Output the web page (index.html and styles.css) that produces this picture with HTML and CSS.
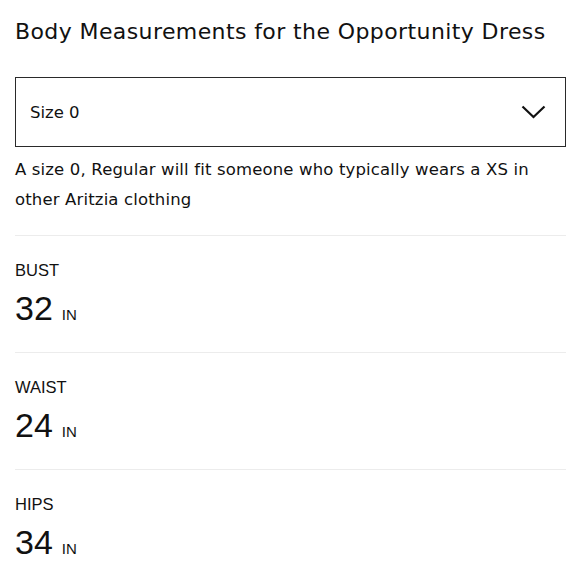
FILE: index.html
```html
<!DOCTYPE html>
<html lang="en">
<head>
<meta charset="utf-8">
<link rel="stylesheet" href="styles.css">
</head>
<body>
<main class="panel">
  <h1 class="title">Body Measurements for the Opportunity Dress</h1>
  <div class="select">
    <span class="select-label">Size 0</span>
    <svg class="chevron" width="25" height="14" viewBox="0 0 25 14" aria-hidden="true"><path d="M1.5 1.5 L12.5 12 L23.5 1.5" fill="none" stroke="#111" stroke-width="2.2"/></svg>
  </div>
  <p class="desc">A size 0, Regular will fit someone who typically wears a XS in other Aritzia clothing</p>
  <section class="measure">
    <div class="m-label">BUST</div>
    <div class="m-value">32<span class="unit">IN</span></div>
  </section>
  <section class="measure">
    <div class="m-label">WAIST</div>
    <div class="m-value">24<span class="unit">IN</span></div>
  </section>
  <section class="measure">
    <div class="m-label">HIPS</div>
    <div class="m-value">34<span class="unit">IN</span></div>
  </section>
</main>
</body>
</html>
```
FILE: styles.css
```css
html, body {
  margin: 0;
  padding: 0;
  background: #fff;
}
.panel {
  padding: 0 14px 0 15px;
  color: #111;
  font-family: "DejaVu Sans", "Noto Sans", sans-serif;
}
.title {
  margin: 0;
  padding-top: 17px;
  font-size: 22px;
  font-weight: 400;
  line-height: 30px;
  letter-spacing: 0.4px;
}
.select {
  margin-top: 30px;
  height: 68px;
  border: 1.5px solid #2a2a2a;
  display: flex;
  align-items: center;
  justify-content: space-between;
  padding: 0 19px 0 14px;
}
.select-label {
  font-size: 16.5px;
}
.chevron {
  display: block;
}
.desc {
  margin: 8px 0 0;
  font-size: 16.5px;
  letter-spacing: 0.15px;
  line-height: 30px;
  padding-right: 6px;
}
.measure {
  margin-top: 20px;
  border-top: 1px solid #ececec;
  padding-top: 24px;
  padding-bottom: 22px;
  font-family: "Liberation Sans", Arial, sans-serif;
}
.measure + .measure {
  margin-top: 0;
}
.m-label {
  font-size: 16.5px;
  line-height: 20px;
}
.m-value {
  margin-top: 13px;
  font-size: 34px;
  line-height: 30px;
}
.unit {
  font-size: 15px;
  margin-left: 9px;
}
```
